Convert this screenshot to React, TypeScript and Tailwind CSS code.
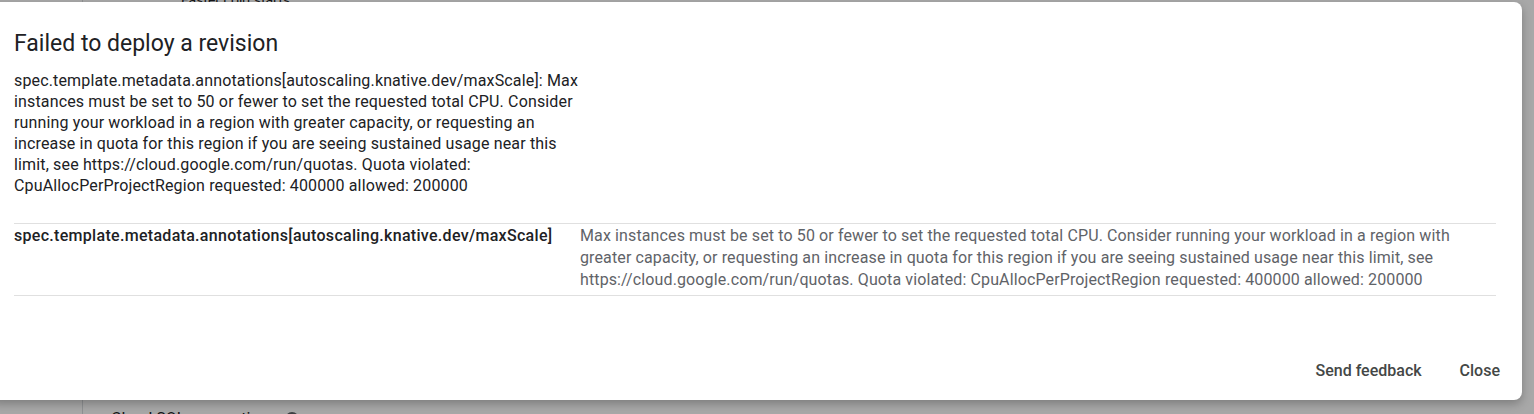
import React from 'react';

const MESSAGE =
  'Max instances must be set to 50 or fewer to set the requested total CPU. Consider running your workload in a region with greater capacity, or requesting an increase in quota for this region if you are seeing sustained usage near this limit, see https://cloud.google.com/run/quotas. Quota violated: CpuAllocPerProjectRegion requested: 400000 allowed: 200000';

const FIELD = 'spec.template.metadata.annotations[autoscaling.knative.dev/maxScale]';

export default function App() {
  return (
    <div className="relative w-full h-[414px] overflow-hidden bg-white font-['Roboto',sans-serif]">
      {/* page behind the dialog */}
      <div className="flex h-full">
        <div className="w-[83px] h-full border-r border-[#dadce0] shrink-0" />
        <div className="flex flex-col justify-between flex-1 h-full">
          <div className="-mt-[10px] pl-[98px] text-[14px] leading-[20px] text-[#202124]">Faster cold starts</div>
          <div className="-mb-[17px] pl-[28px] text-[16px] leading-[24px] text-[#202124] flex items-center gap-2">
            Cloud SQL connections
            <span className="w-[14px] h-[14px] rounded-full border-2 border-[#5f6368]" />
          </div>
        </div>
      </div>

      {/* scrim */}
      <div className="absolute inset-0 bg-[#000000]/[0.34]" />

      {/* dialog */}
      <div className="absolute top-[2px] -left-[10px] w-[1532px] h-[398px] bg-white rounded-[8px] shadow-[0_4px_10px_rgba(0,0,0,0.25)] flex flex-col">
        <div className="pl-[24px] pr-[26px] flex-1">
          <h2 className="pt-[28px] text-[23px] leading-[28px] text-[#202124] font-normal">
            Failed to deploy a revision
          </h2>
          <p className="mt-[12px] w-[566px] text-[16px] leading-[21px] tracking-[0.15px] text-[#202124]">
            {FIELD}: {MESSAGE}
          </p>

          <div className="mt-[27px] border-t border-b border-[#e0e0e0] flex">
            <div className="w-[566px] shrink-0 pt-[1px] pb-[4px] text-[16px] leading-[22px] tracking-[0.3px] font-medium text-[#202124]">
              {FIELD}
            </div>
            <div className="flex-1 pt-[1px] pb-[4px] pr-[40px] text-[16px] leading-[22px] tracking-[0.12px] text-[#5f6368]">
              {MESSAGE}
            </div>
          </div>
        </div>

        <div className="flex justify-end items-center gap-[14px] pr-[10px] pb-[11px]">
          <button className="px-[12px] h-[36px] text-[16px] font-medium text-[#444746] rounded">
            Send feedback
          </button>
          <button className="px-[12px] h-[36px] text-[16px] font-medium text-[#444746] rounded">
            Close
          </button>
        </div>
      </div>
    </div>
  );
}
